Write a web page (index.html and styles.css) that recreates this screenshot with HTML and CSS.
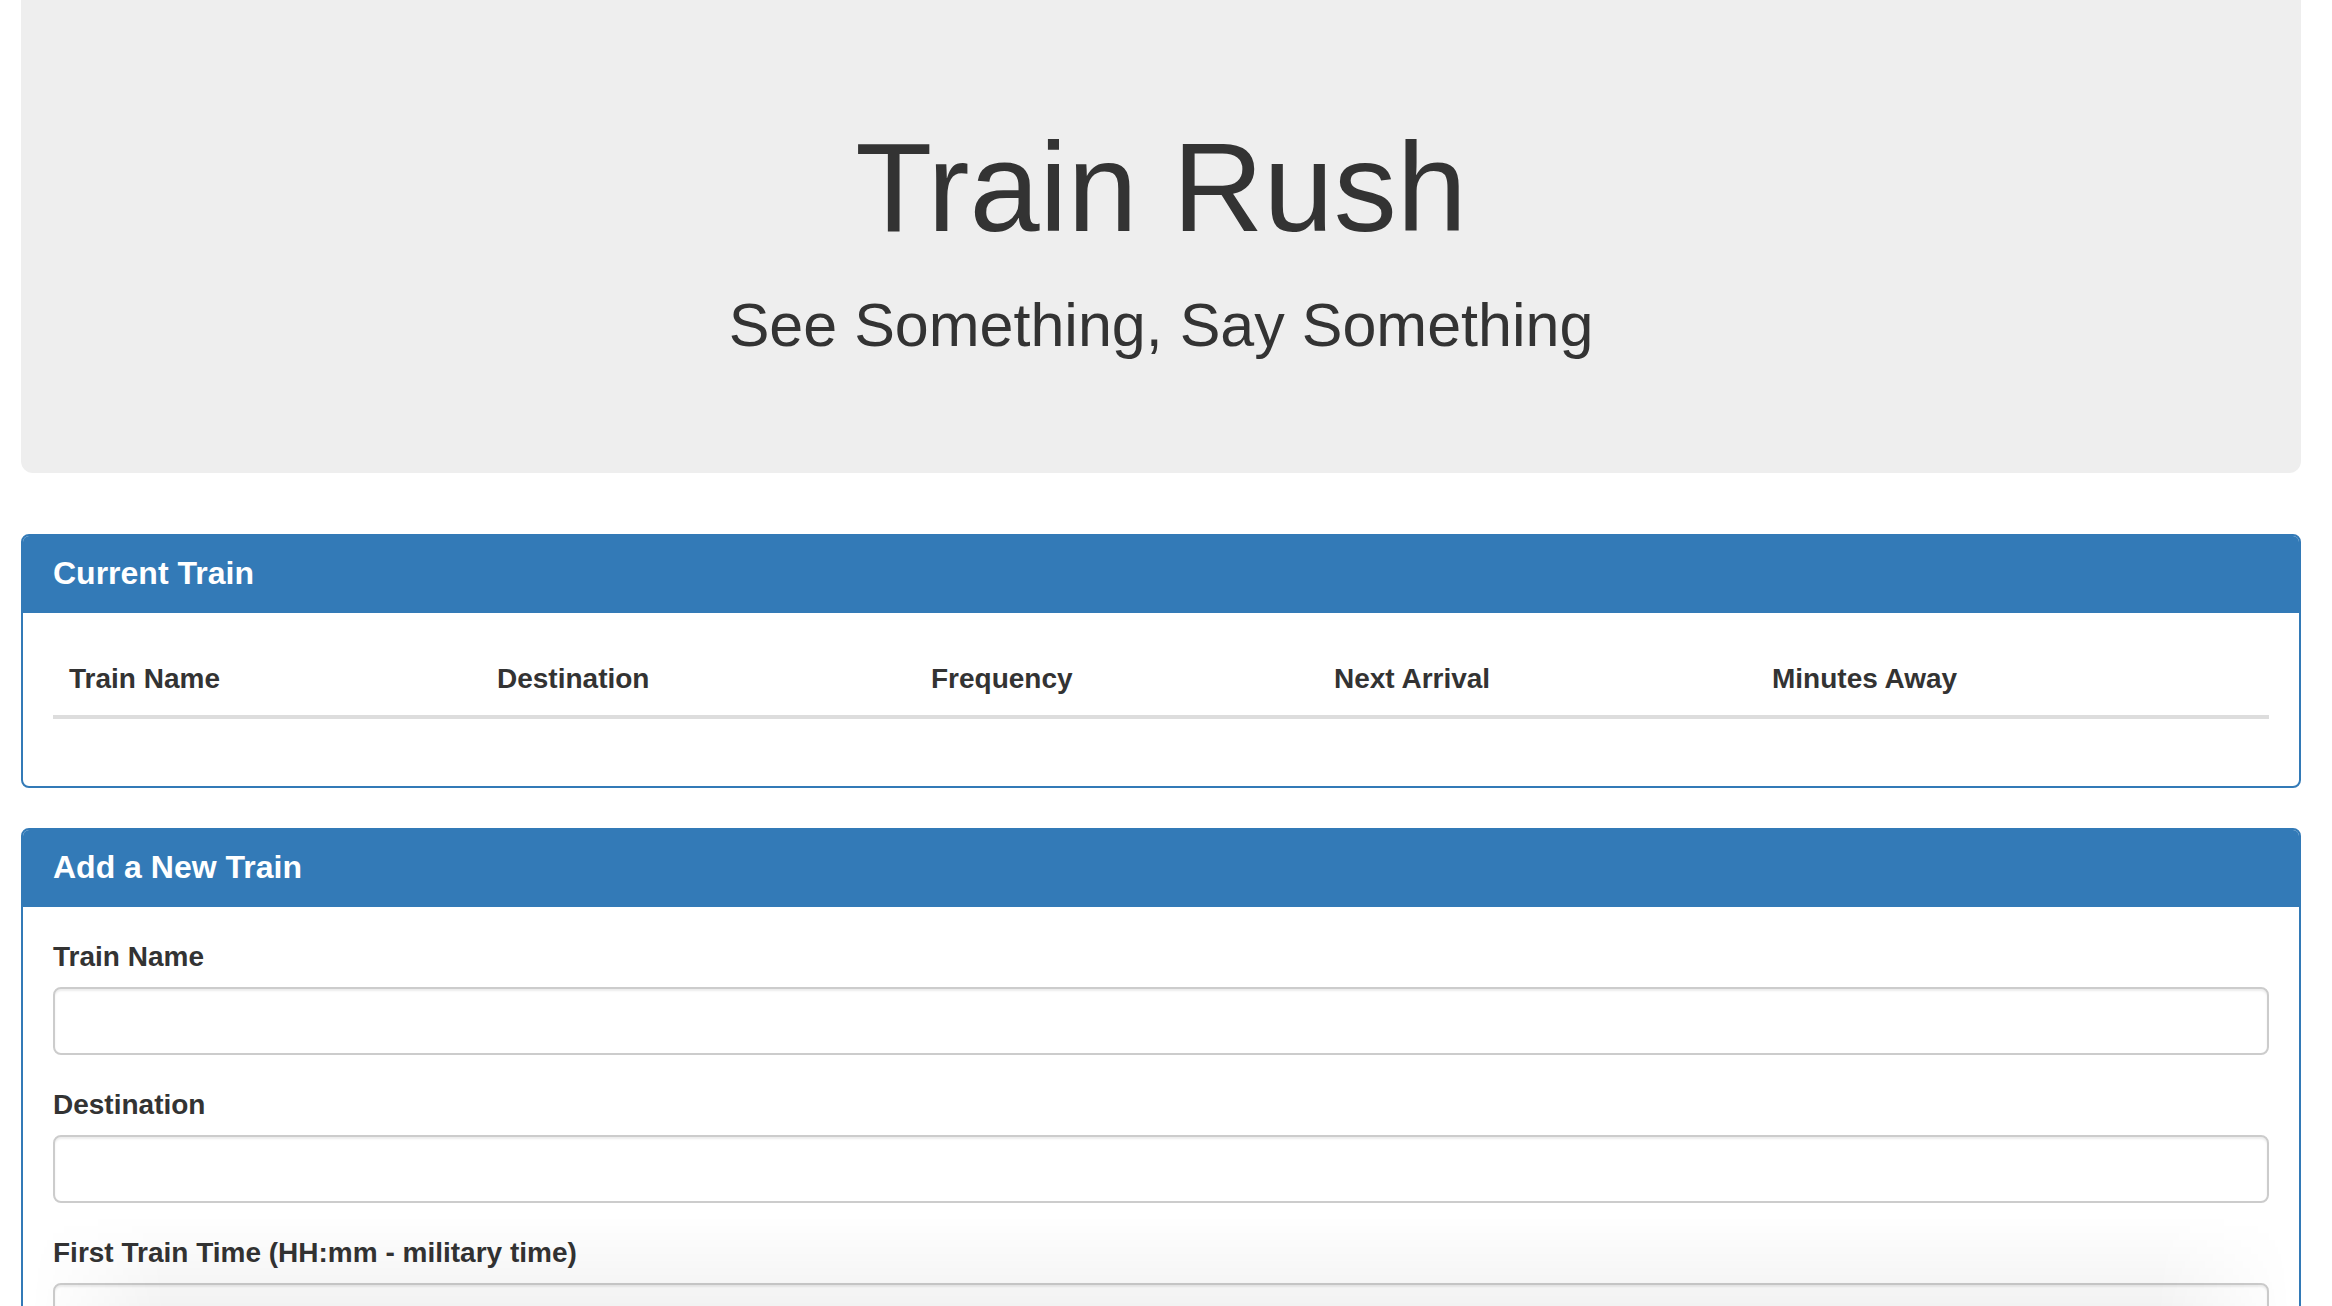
FILE: index.html
```html
<!DOCTYPE html>
<html lang="en">
<head>
<meta charset="utf-8">
<title>Train Rush</title>
<link rel="stylesheet" href="styles.css">
</head>
<body>
<div class="container">
  <header class="jumbotron">
    <h1 class="title">Train Rush</h1>
    <h2 class="subtitle">See Something, Say Something</h2>
  </header>

  <section class="panel">
    <div class="panel-heading">
      <h3 class="panel-title">Current Train</h3>
    </div>
    <div class="panel-body">
      <table class="table">
        <thead>
          <tr>
            <th class="col-name">Train Name</th>
            <th class="col-dest">Destination</th>
            <th class="col-freq">Frequency</th>
            <th class="col-next">Next Arrival</th>
            <th class="col-min">Minutes Away</th>
          </tr>
        </thead>
        <tbody></tbody>
      </table>
    </div>
  </section>

  <section class="panel">
    <div class="panel-heading">
      <h3 class="panel-title">Add a New Train</h3>
    </div>
    <div class="panel-body">
      <form class="form">
        <div class="form-group">
          <label class="label" for="train-name">Train Name</label>
          <input class="form-control" id="train-name" type="text">
        </div>
        <div class="form-group">
          <label class="label" for="destination">Destination</label>
          <input class="form-control" id="destination" type="text">
        </div>
        <div class="form-group">
          <label class="label" for="first-time">First Train Time (HH:mm - military time)</label>
          <input class="form-control" id="first-time" type="text">
        </div>
      </form>
    </div>
  </section>
</div>
<div class="bottom-shade"></div>
</body>
</html>
```

FILE: styles.css
```css
* {
  box-sizing: border-box;
}

html, body {
  margin: 0;
  padding: 0;
}

body {
  background: #fff;
  color: #333;
  font-family: "Liberation Sans", Arial, Helvetica, sans-serif;
  font-size: 28px;
  line-height: 40px;
}

.container {
  padding: 0 31px 0 21px;
}

.jumbotron {
  background: #eeeeee;
  border-radius: 0 0 12px 12px;
  padding: 118px 60px 96px;
  margin-bottom: 61px;
  text-align: center;
}

.title {
  margin: 0 0 35px;
  font-size: 126px;
  line-height: 139px;
  font-weight: 500;
  color: #333;
}

.subtitle {
  margin: 0 0 18px;
  font-size: 61px;
  line-height: 67px;
  font-weight: 500;
  color: #333;
}

.panel {
  border: 2px solid #337ab7;
  border-radius: 8px;
  margin-bottom: 40px;
  background: #fff;
  overflow: hidden;
}

.panel-heading {
  background: #337ab7;
  color: #fff;
  padding: 20px 30px;
  border-bottom: 2px solid #337ab7;
}

.panel-title {
  margin: 0;
  font-size: 32px;
  line-height: 35px;
  font-weight: 700;
}

.panel-body {
  padding: 30px;
}

.table {
  width: 100%;
  border-collapse: collapse;
  table-layout: fixed;
  margin-bottom: 37px;
}

.table th {
  text-align: left;
  padding: 16px;
  font-weight: 700;
  line-height: 40px;
  border-bottom: 4px solid #ddd;
  white-space: nowrap;
}

.col-name { width: 428px; }
.col-dest { width: 434px; }
.col-freq { width: 403px; }
.col-next { width: 438px; }

.form-group {
  margin-bottom: 30px;
}

.label {
  display: inline-block;
  margin-bottom: 10px;
  font-weight: 700;
}

.form-control {
  display: block;
  width: 100%;
  height: 68px;
  padding: 12px 24px;
  font-family: inherit;
  font-size: 28px;
  color: #555;
  background: #fff;
  border: 2px solid #ccc;
  border-radius: 8px;
  box-shadow: inset 0 2px 2px rgba(0, 0, 0, 0.075);
  outline: none;
}

.bottom-shade {
  position: fixed;
  left: 30px;
  right: 40px;
  bottom: 0;
  height: 90px;
  pointer-events: none;
  background: linear-gradient(to bottom, rgba(0, 0, 0, 0), rgba(0, 0, 0, 0.05));
  -webkit-mask-image: linear-gradient(to right, transparent, #000 6%, #000 94%, transparent);
  mask-image: linear-gradient(to right, transparent, #000 6%, #000 94%, transparent);
}
```
